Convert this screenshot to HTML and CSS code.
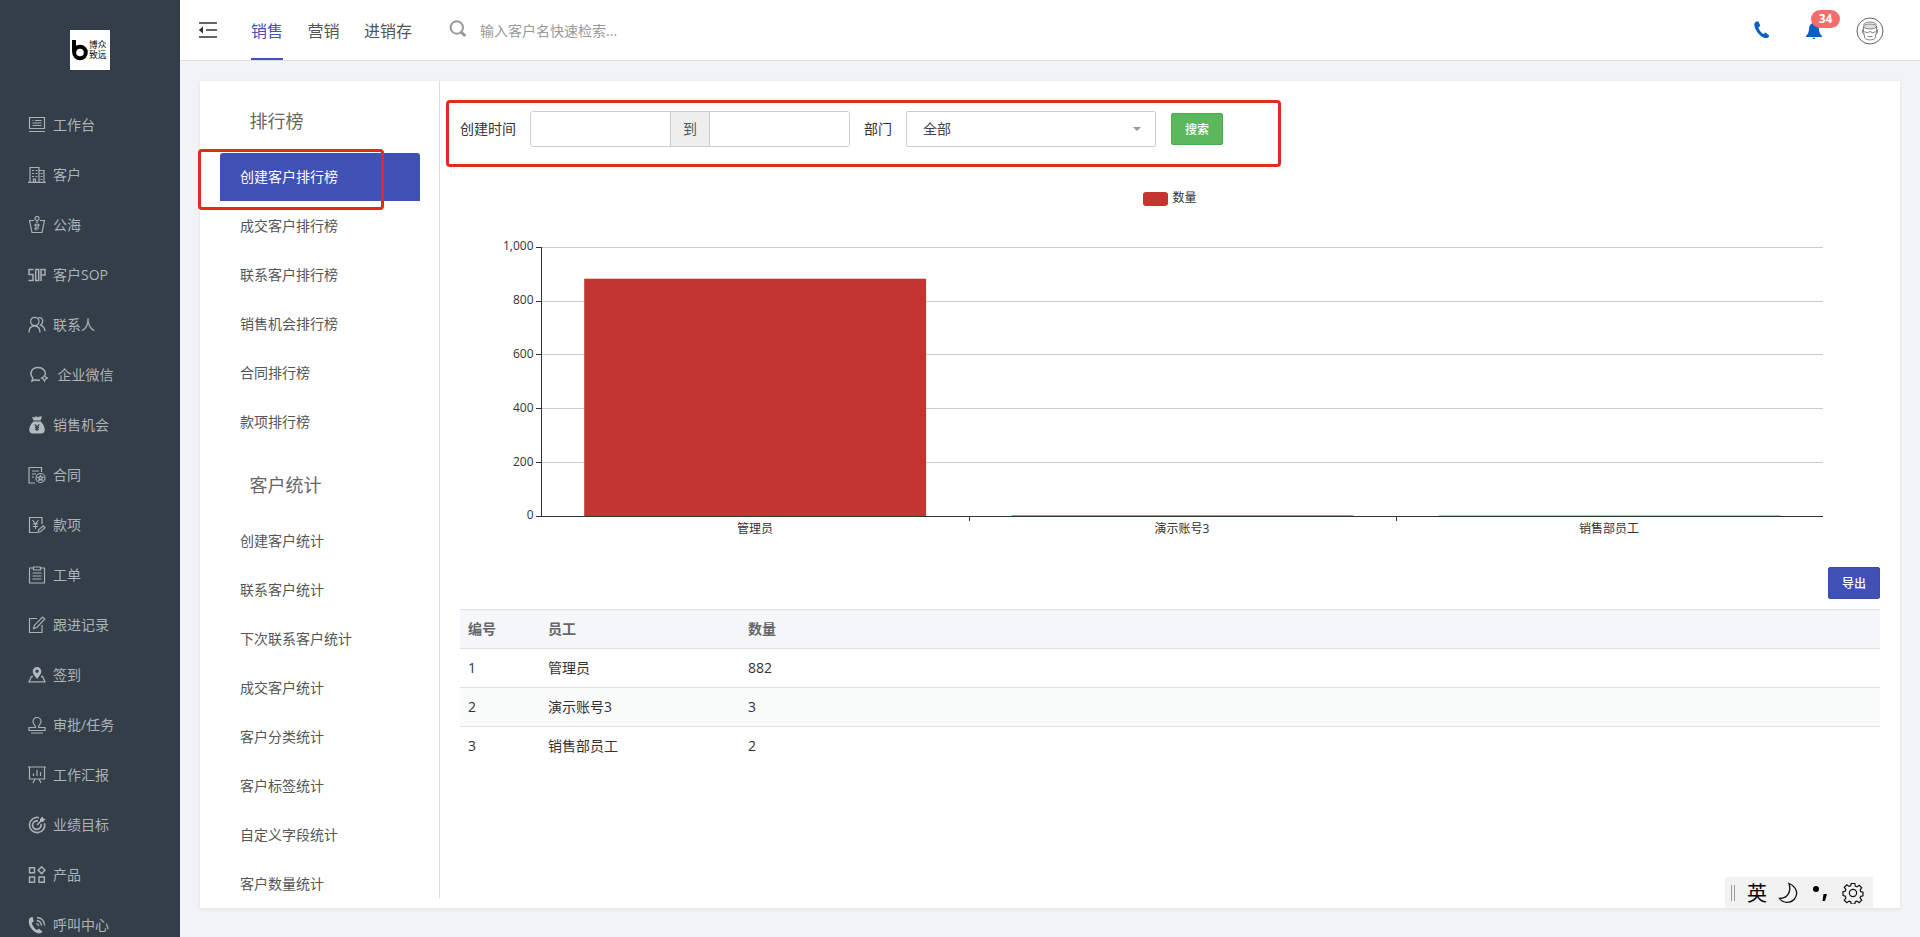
FILE: index.html
```html
<!DOCTYPE html>
<html lang="zh-CN">
<head>
    <meta charset="UTF-8">
    <title>创建客户排行榜</title>
    <meta name="viewport" content="width=device-width, initial-scale=1.0">
    <link rel="stylesheet" href="styles.css">
</head>
<body>
    <!-- Sidebar -->
    <aside class="sidebar">
        <div class="logo">
            <svg width="17" height="22" viewBox="0 0 17 22"><path d="M2 1v12" stroke="#000" stroke-width="4" fill="none"/><circle cx="8" cy="13.500" r="5.800" fill="none" stroke="#000" stroke-width="4"/></svg>
            <span>博众<br>致远</span>
        </div>
        <ul class="menu">
            <li><svg class="icon" viewBox="0 0 18 18"><path d="M1.500 1.500h15v11h-15zM1 15.500h16M4.500 4.500h1M7 4.500h6.500M4.500 7h9M4.500 9.500h9"/></svg>工作台</li>
            <li><svg class="icon" viewBox="0 0 18 18"><path d="M2 16V1.500h9V16M11 4.500h5V16M0 16.300h18M4 4.500h2M7.500 4.500h2M4 7.500h2M7.500 7.500h2M4 10.500h2M7.500 10.500h2M5.500 16v-3h2v3M12.500 7.500h2M12.500 10.500h2M12.500 13.500h2"/></svg>客户</li>
            <li><svg class="icon" viewBox="0 0 18 18"><path d="M6 4.500H1.500L4 16.500h10l2.500-12H12M9 4.500v3M8 8v5.500L6.500 12M10 8l1.500 1.500M10 8v5.500M8 8L6.500 9.500"/><circle cx="9" cy="2.500" r="2"/></svg>公海</li>
            <li><svg class="icon" viewBox="0 0 18 18"><path stroke-width="1.500" d="M5.500 3.500H1v5h4v6H.5M7.700 3.500h3v11h-3zM13 15V3.500h4v5.500h-4"/></svg>客户SOP</li>
            <li><svg class="icon" viewBox="0 0 18 18"><path stroke-width="1.300" d="M1 16.500c0-4 2-6.500 5.500-6.500s5.500 2.500 5.500 6.500M10 2c3-1 5.500 1 4.500 4.500-.3 1.300-1 2-2 2.700 2.500 1 4.200 3 4.500 5.800"/><circle cx="6.800" cy="5.500" r="4.200"/></svg>联系人</li>
            <li class="wide"><svg class="icon" viewBox="0 0 18 18"><path stroke-width="1.500" d="M10 14c-1.700.5-3.500.4-5-.3L2 15l.8-3C-1 8 1.500 1.500 8 1.500c5 0 8 3.500 7.300 7.500"/><path d="M14.500 9.300l1 1.700 2 1-2 1-1 2.200-1.200-2.200-1.800-1 1.800-1z"/></svg>企业微信</li>
            <li><svg class="icon" viewBox="0 0 18 18"><path class="fill" d="M4 .8l2 .6L8 .3l2 1 2-1 2 .5-1.500 3.700h-7zM5.300 5.500h7.400c3 3 4.300 6 4 9-.2 2-1.500 3-3.500 3H4.800c-2 0-3.300-1-3.500-3-.3-3 1-6 4-9z"/><path class="cut" d="M6.800 8.300L9 11l2.200-2.700M9 11v4M7 11.300h4M7 13.200h4"/></svg>销售机会</li>
            <li><svg class="icon" viewBox="0 0 18 18"><path d="M7 17H1V1.500h12.500V6M4 5h7M4 8h4M4 11h2"/><circle cx="12.500" cy="12" r="4.500"/><path d="M12.500 9.500l.8 1.600 1.700.2-1.200 1.200.3 1.800-1.600-.9-1.600.9.300-1.800-1.200-1.200 1.700-.2z"/></svg>合同</li>
            <li><svg class="icon" viewBox="0 0 18 18"><path d="M9 16.500H1.500v-15H14V8M4.500 4L7.500 8l3-4M7.500 8v5M4.800 8h5.400M4.800 10.500h5.400M10 16.500l.7-2.700 4.500-4 1.800 2-4.500 4z"/></svg>款项</li>
            <li><svg class="icon" viewBox="0 0 18 18"><path d="M5 2H1.500v15h15V2H13M5.500 1h7v3h-7zM4.500 7h9M4.500 10h9M4.500 13h9" stroke-width="1.200"/></svg>工单</li>
            <li><svg class="icon" viewBox="0 0 18 18"><path d="M9 2.500H1.500v14h12.500V9M5.500 12.500l1-3.300L14.500 1l2.300 2-8 8.500z"/></svg>跟进记录</li>
            <li><svg class="icon" viewBox="0 0 18 18"><path class="fill" fill-rule="evenodd" d="M9 13C6 9.500 4.700 7.500 4.700 5.300a4.300 4.300 0 018.600 0C13.300 7.500 12 9.500 9 13zM9 3.500a1.700 1.700 0 100 3.400 1.700 1.700 0 000-3.400z"/><path d="M5 10.500H3.500L1 15.800h16l-2.500-5.300H13" stroke-width="1.300"/></svg>签到</li>
            <li><svg class="icon" viewBox="0 0 18 18"><path stroke-width="1.200" d="M7.500 11.500c.5-2-2.500-3-2.500-6a4 4 0 018 0c0 3-3 4-2.500 6H17v3H1v-3zM3 17h12"/></svg>审批/任务</li>
            <li><svg class="icon" viewBox="0 0 18 18"><path d="M0 1h18M1.500 1v12h15V1M5.500 10V7.500M9 10V4M12.500 10V6M7 13l-2 4M11 13l2 4"/></svg>工作汇报</li>
            <li><svg class="icon" viewBox="0 0 18 18"><path stroke-width="1.700" d="M11 1.700a7.600 7.600 0 105.500 5.500M10 5a4.300 4.300 0 103 3M9 9l4-4"/><path class="fill" d="M12 5.500V3l2.500-2.500.7 2 2.300.6L15 6z"/></svg>业绩目标</li>
            <li><svg class="icon" viewBox="0 0 18 18"><path stroke-width="1.500" d="M1.500 1.700h5v5h-5zM1.500 11h5v5.300h-5zM11 11h5.300v5.300H11zM13.600.8L17 4.200l-3.400 3.400-3.400-3.400z"/></svg>产品</li>
            <li><svg class="icon" viewBox="0 0 18 18"><path class="fill" d="M4.500.7l1.300 4.600-2 1.700c.8 3 2.500 5.500 5 7l2.200-1.300 3.500 3c-1.300 1.800-3.500 2.200-6 1C3.500 14.500.2 9.300.8 4.300 1 2.300 2.500 1 4.500.7z"/><path stroke-width="1.300" d="M8.500 7.500c1.300.2 2 1 2.200 2.500M8.700 4.500c2.800.3 4.500 2.200 4.800 5M9 1.500c4.500.3 7.300 3.500 7.500 8"/></svg>呼叫中心</li>
        </ul>
    </aside>

    <div class="main">
        <!-- Top bar -->
        <header class="topbar">
            <svg class="toggle" width="20" height="18" viewBox="0 0 20 18"><path d="M1 2h18M8 9h11M1 16h18" stroke="#333" stroke-width="1.600" fill="none"/><path d="M5 5.500v7L.8 9z" fill="#333"/></svg>
            <nav class="tabs">
                <a class="active">销售</a>
                <a>营销</a>
                <a>进销存</a>
            </nav>
            <div class="search">
                <svg width="18" height="18" viewBox="0 0 18 18"><circle cx="7.800" cy="7.500" r="6.200" fill="none" stroke="#999" stroke-width="2"/><path d="M12 12l4.300 4" stroke="#999" stroke-width="3"/></svg>
                <span>输入客户名快速检索...</span>
            </div>
            <div class="tools">
                <svg class="phone" width="16" height="18" viewBox="0 0 16 18"><path fill="#0a60c2" d="M2.500.5C.5 1 0 3 .5 5.200 1.500 9.500 5.500 15 10 16.700c2.500.8 4.700.1 5.300-2L11.500 11.500 9.300 13C7 11.500 5.200 9 4.300 6.500l2-1.500L4.500.5z"/></svg>
                <div class="bell">
                    <svg width="16" height="18" viewBox="0 0 16 18"><path fill="#0a60c2" d="M8 1C4.500 1 3.300 4 3 7c-.2 3-.8 5-3 7v1h16v-1c-2.200-2-2.800-4-3-7-.3-3-1.500-6-5-6zM6.500 15.700h3c-.3 1.800-2.700 1.800-3 0z"/></svg>
                    <span class="badge">34</span>
                </div>
                <svg class="avatar" width="28" height="28" viewBox="0 0 28 28" fill="none" stroke="#666"><circle cx="14" cy="14" r="13"/><ellipse cx="14" cy="9.500" rx="6.500" ry="2.500" fill="#ddd" stroke-width=".8"/><path stroke-width=".8" d="M7.500 9v5l1.300 7c1 2.500 9.400 2.500 10.400 0l1.300-7V9M7.500 8c1-4 12-4 13 0M6.500 12.500v3l1.500 2M21.500 12.500v3l-1.500 2M8.500 14.500q2.500 2.500 5.500 0q3 2.500 5.500 0M11.500 19.500h5"/></svg>
            </div>
        </header>

        <section class="card">
            <!-- Report list -->
            <div class="reports">
                <h3>排行榜</h3>
                <ul>
                    <li class="active">创建客户排行榜<i class="mark mark-item"></i></li>
                    <li>成交客户排行榜</li>
                    <li>联系客户排行榜</li>
                    <li>销售机会排行榜</li>
                    <li>合同排行榜</li>
                    <li>款项排行榜</li>
                </ul>
                <h3>客户统计</h3>
                <ul>
                    <li>创建客户统计</li>
                    <li>联系客户统计</li>
                    <li>下次联系客户统计</li>
                    <li>成交客户统计</li>
                    <li>客户分类统计</li>
                    <li>客户标签统计</li>
                    <li>自定义字段统计</li>
                    <li>客户数量统计</li>
                </ul>
            </div>

            <div class="content">
                <!-- Filters -->
                <div class="filters">
                    <label>创建时间</label>
                    <div class="range">
                        <input type="text"><span>到</span><input type="text">
                    </div>
                    <label>部门</label>
                    <div class="select">全部<i class="caret"></i></div>
                    <button class="btn green">搜索</button>
                    <i class="mark mark-filters"></i>
                </div>

                <!-- Chart -->
                <svg class="chart" width="1420" height="380" viewBox="460 177 1420 380">
                    <rect x="1143" y="192" width="25" height="14" rx="3" fill="#c23531"/>
                    <text x="1172.500" y="202">数量</text>
                    <g stroke="#ccc" shape-rendering="crispEdges">
                        <path d="M542 247.500h1281M542 301.500h1281M542 354.500h1281M542 408.500h1281M542 462.500h1281"/>
                    </g>
                    <g fill="#c23531">
                        <rect x="584.200" y="278.700" width="341.900" height="237.300"/>
                        <rect x="1011.500" y="515.400" width="341.900" height=".6"/>
                        <rect x="1438.800" y="515.600" width="341.900" height=".4"/>
                    </g>
                    <path d="M541.500 247v269M536 247.500h5M536 301.500h5M536 354.500h5M536 408.500h5M536 462.500h5M536 516.500h1287M969.500 516v5M1396.500 516v5" stroke="#333" shape-rendering="crispEdges"/>
                    <g text-anchor="end">
                        <text x="533.500" y="250">1,000</text>
                        <text x="533.500" y="304">800</text>
                        <text x="533.500" y="358">600</text>
                        <text x="533.500" y="412">400</text>
                        <text x="533.500" y="466">200</text>
                        <text x="533.500" y="519">0</text>
                    </g>
                    <g text-anchor="middle">
                        <text x="755" y="533">管理员</text>
                        <text x="1182" y="533">演示账号3</text>
                        <text x="1609" y="533">销售部员工</text>
                    </g>
                </svg>

                <div class="actions"><button class="btn blue">导出</button></div>

                <!-- Table -->
                <table>
                    <colgroup><col class="c-no"><col class="c-name"><col></colgroup>
                    <thead>
                        <tr><th>编号</th><th>员工</th><th>数量</th></tr>
                    </thead>
                    <tbody>
                        <tr><td>1</td><td>管理员</td><td>882</td></tr>
                        <tr><td>2</td><td>演示账号3</td><td>3</td></tr>
                        <tr><td>3</td><td>销售部员工</td><td>2</td></tr>
                    </tbody>
                </table>
            </div>
        </section>
    </div>

    <!-- Input method bar -->
    <div class="ime">
        <i class="grip"></i>
        <span>英</span>
        <svg width="20" height="22" viewBox="0 0 20 22"><path d="M11 1.500C19 5 20.500 12 16.500 17 12.500 21.500 5 21.500 1.500 16.500 9.500 16.500 13.500 10 11 1.500z" fill="none" stroke="#111" stroke-width="1.300"/></svg>
        <svg width="16" height="22" viewBox="0 0 16 22"><circle cx="4" cy="7" r="3" fill="#000"/><path d="M11.500 12h3.500l-2 7h-2.500z" fill="#000"/></svg>
        <svg width="22" height="22" viewBox="0 0 22 22" fill="none" stroke="#111" stroke-width="1.200"><circle cx="11" cy="11" r="3.600"/><path d="M9.200 1.500h3.600l.5 2.700 1.600.7 2.300-1.600 2.500 2.500-1.600 2.300.7 1.600 2.200.5v3.600l-2.200.5-.7 1.600 1.600 2.300-2.500 2.500-2.300-1.600-1.600.7-.5 2.200H9.200l-.5-2.200-1.600-.7-2.300 1.600-2.500-2.500 1.600-2.300-.7-1.600L1 13.300V9.700l2.200-.5.700-1.600-1.600-2.300 2.500-2.500 2.300 1.600 1.600-.7z"/></svg>
    </div>
</body>
</html>
```
FILE: styles.css
```css
/* ====== Base ====== */
* {
    box-sizing: border-box;
}
body {
    margin: 0;
    height: 937px;
    display: flex;
    overflow: hidden;
    background: #f1f3f5;
    color: #333;
    font: 14px/20px "Open Sans", "Noto Sans CJK SC", sans-serif;
}
ul {
    margin: 0;
    padding: 0;
    list-style: none;
}

/* ====== Sidebar ====== */
.sidebar {
    width: 180px;
    flex: none;
    padding-top: 30px;
    background: #343e49;
    overflow: hidden;
}
.logo {
    width: 40px;
    height: 40px;
    margin: 0 auto 30px 70px;
    padding-left: 2px;
    background: #fff;
    display: flex;
    align-items: center;
    color: #000;
    font-size: 8.7px;
    line-height: 10px;
    white-space: nowrap;
}
.logo svg {
    flex: none;
}
.menu li {
    height: 50px;
    padding-left: 28px;
    display: flex;
    align-items: center;
    gap: 7px;
    color: #adb3b8;
}
.menu li.wide {
    padding-left: 30px;
    gap: 9.5px;
}
.icon {
    width: 18px;
    height: 18px;
    fill: none;
    stroke: #a9b0b6;
    stroke-width: 1.2;
}
.icon .fill {
    fill: #b3b9be;
    stroke: none;
}
.icon .cut {
    stroke: #343e49;
}

/* ====== Top bar ====== */
.main {
    flex: 1;
}
.topbar {
    height: 61px;
    padding-left: 18px;
    background: #fff;
    border-bottom: 1px solid #dcdfe2;
    display: flex;
    align-items: center;
}
.tabs {
    display: flex;
    gap: 24.5px;
    margin-left: 33px;
    font-size: 16px;
}
.tabs a {
    height: 60px;
    line-height: 62px;
    color: #555;
}
.tabs .active {
    color: #3f51b5;
    border-bottom: 2px solid #3f51b5;
}
.search {
    display: flex;
    align-items: center;
    gap: 13px;
    margin-left: 37px;
    padding-top: 2px;
    color: #999;
}
.search svg {
    margin-top: -4px;
}
.tools {
    margin-left: auto;
    padding: 2px 36px 0 0;
    display: flex;
    align-items: center;
}
.phone {
    margin-top: -2px;
}
.bell {
    position: relative;
    height: 18px;
    margin: 0 34px 0 36px;
}
.bell svg {
    display: block;
}
.badge {
    position: absolute;
    left: 5px;
    top: -12px;
    width: 29px;
    height: 18px;
    border-radius: 9px;
    background: #f56c6c;
    color: #fff;
    font-size: 12px;
    font-weight: bold;
    line-height: 18px;
    text-align: center;
}

/* ====== Card ====== */
.card {
    height: 827px;
    margin: 20px 20px 0;
    display: flex;
    background: #fff;
    box-shadow: 0 1px 4px rgba(0,0,0,0.08);
}
.reports {
    width: 240px;
    height: 817px;
    padding: 10px 19px 0 20px;
    border-right: 1px solid #ddd;
}
.reports h3 {
    height: 62px;
    margin: 0;
    padding-left: 29.5px;
    color: #666;
    font-size: 18px;
    font-weight: normal;
    line-height: 61px;
}
.reports ul + h3 {
    margin-top: 9px;
}
.reports li {
    height: 48px;
    margin-bottom: 1px;
    padding-left: 20px;
    color: #555;
    line-height: 48px;
}
.reports .active {
    position: relative;
    background: #3f51b5;
    border-radius: 3px 3px 0 0;
    color: #fff;
}

/* ====== Red highlight frames ====== */
.mark {
    position: absolute;
    border: 3px solid #e4291d;
    border-radius: 4px;
}
.mark-item {
    left: -22px;
    top: -4px;
    width: 186px;
    height: 61px;
}
.mark-filters {
    left: -14px;
    top: -11px;
    width: 835px;
    height: 67px;
}

/* ====== Filters ====== */
.content {
    flex: 1;
    padding: 30px 20px 0;
}
.filters {
    position: relative;
    height: 36px;
    display: flex;
    align-items: center;
}
.range {
    display: flex;
    width: 320px;
    height: 36px;
    margin: 0 14px;
    border: 1px solid #ccc;
    border-radius: 3px;
    overflow: hidden;
}
.range input {
    flex: 1;
    min-width: 0;
    padding: 0 12px;
    border: 0;
}
.range span {
    width: 40px;
    background: #eee;
    border: solid #ccc;
    border-width: 0 1px;
    color: #555;
    line-height: 34px;
    text-align: center;
}
.select {
    width: 250px;
    height: 36px;
    margin: 0 15px 0 14px;
    padding: 0 14px 0 16px;
    border: 1px solid #ccc;
    border-radius: 2px;
    display: flex;
    align-items: center;
    justify-content: space-between;
    color: #444;
}
.caret {
    border: 4px solid transparent;
    border-top-color: #999;
    border-bottom: 0;
}
.btn {
    width: 52px;
    height: 32px;
    padding: 2px 0 0;
    border-radius: 2px;
    color: #fff;
    font: 500 12px/28px "Open Sans", "Noto Sans CJK SC", sans-serif;
}
.green {
    background: #5cb85c;
    border: 1px solid #4cae4c;
}
.blue {
    background: #3f51b5;
    border: 1px solid #3a4bab;
}

/* ====== Chart ====== */
.chart {
    display: block;
    margin-top: 30px;
}
.chart text {
    fill: #333;
    font-size: 12px;
}

/* ====== Table ====== */
.actions {
    display: flex;
    justify-content: flex-end;
    margin: 10px 0;
}
table {
    width: 100%;
    border-collapse: collapse;
    table-layout: fixed;
}
.c-no {
    width: 80px;
}
.c-name {
    width: 200px;
}
th, td {
    height: 39px;
    padding: 0 8px;
    border-top: 1px solid #dfe1e4;
    text-align: left;
}
th {
    background: #f5f7fa;
    color: #666;
    font-weight: bold;
}
tbody tr:nth-child(even) {
    background: #fafcfb;
}

/* ====== Input method bar ====== */
.ime {
    position: fixed;
    left: 1725px;
    top: 877px;
    width: 148px;
    height: 31px;
    padding-left: 6px;
    display: flex;
    align-items: center;
    background: #f2f2f2;
    color: #000;
    font-size: 20px;
}
.grip {
    width: 4px;
    height: 16px;
    margin-right: 12px;
    border: solid #999;
    border-width: 0 1px;
}
.ime span {
    padding-top: 2px;
}
.ime svg {
    margin-left: 11px;
}
.ime svg + svg {
    margin-left: 14px;
}
```
